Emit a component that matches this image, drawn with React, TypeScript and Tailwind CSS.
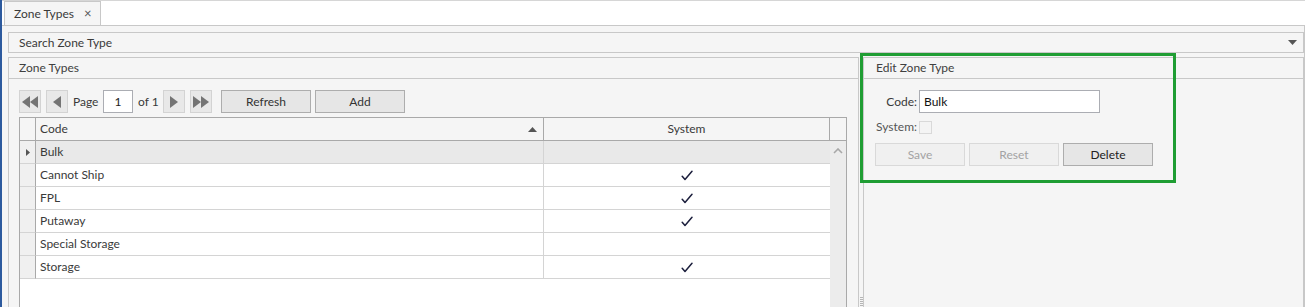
import React from "react";

const Check = () => (
  <svg width="12" height="11" viewBox="0 0 12 11">
    <path d="M1.2 6.2 L4 9.4 L11 1.2" fill="none" stroke="#1c1f3d" strokeWidth="1.5" strokeLinecap="round" strokeLinejoin="round" />
  </svg>
);

const TriLeft = () => (
  <svg width="8" height="12" viewBox="0 0 8 12">
    <polygon points="8,0 0,6 8,12" fill="#747474" />
  </svg>
);
const TriRight = () => (
  <svg width="8" height="12" viewBox="0 0 8 12">
    <polygon points="0,0 8,6 0,12" fill="#747474" />
  </svg>
);
const DblLeft = () => (
  <svg width="16" height="12" viewBox="0 0 16 12">
    <polygon points="8,0 0,6 8,12" fill="#747474" />
    <polygon points="16,0 8,6 16,12" fill="#747474" />
  </svg>
);
const DblRight = () => (
  <svg width="16" height="12" viewBox="0 0 16 12">
    <polygon points="0,0 8,6 0,12" fill="#747474" />
    <polygon points="8,0 16,6 8,12" fill="#747474" />
  </svg>
);

const PagerBtn = ({ children, className = "" }: { children: React.ReactNode; className?: string }) => (
  <div className={`w-[22px] h-[23px] shrink-0 border border-[#d3d3d3] bg-[#e8e8e8] flex items-center justify-center ${className}`}>
    {children}
  </div>
);

const rows = [
  { code: "Bulk", sys: false, sel: true },
  { code: "Cannot Ship", sys: true },
  { code: "FPL", sys: true },
  { code: "Putaway", sys: true },
  { code: "Special Storage", sys: false },
  { code: "Storage", sys: true },
];

export default function App() {
  return (
    <div className="relative w-[1309px] h-[307px] overflow-hidden bg-white text-[12px] leading-none text-[#3a3a3a] font-['Lato','Liberation_Sans',sans-serif] flex">
      <div className="w-[2px] shrink-0 bg-[#2d5a9e]" />
      <div className="flex-1 flex flex-col min-w-0">
        {/* tab strip */}
        <div className="h-[25px] shrink-0 border-t border-[#d6d6d6] flex items-end pl-[2px] mr-[4px]">
          <div className="h-[24px] w-[97px] border border-b-0 border-[#c8c8c8] bg-[#f5f5f5] flex items-center pl-[9px]">
            <span>Zone Types</span>
            <span className="ml-[10px] text-[13px] text-[#555]">×</span>
          </div>
        </div>
        {/* frame */}
        <div className="flex-1 min-h-0 border-t border-r border-[#c8c8c8] bg-[#f5f5f5] mr-[4px] pt-[6px] pl-[6px] flex flex-col gap-[4px]">
          {/* search expander */}
          <div className="h-[21px] shrink-0 border border-[#c8c8c8] bg-[#f5f5f5] flex items-center pl-[10px] pr-[6px]">
            <span>Search Zone Type</span>
            <svg className="ml-auto" width="9" height="5" viewBox="0 0 9 5">
              <polygon points="0,0 9,0 4.5,5" fill="#555" />
            </svg>
          </div>
          {/* main row */}
          <div className="flex flex-1 min-h-0">
            {/* Zone Types box */}
            <div className="w-[851px] h-[400px] shrink-0 border border-[#c8c8c8] bg-[#f5f5f5] flex flex-col">
              <div className="h-[21px] shrink-0 border-b border-[#c8c8c8] flex items-center pl-[10px] text-[#404040]">
                Zone Types
              </div>
              <div className="pt-[11px] pl-[10px] flex flex-col">
                {/* pager */}
                <div className="flex items-center h-[23px]">
                  <PagerBtn><DblLeft /></PagerBtn>
                  <PagerBtn className="ml-[5px]"><TriLeft /></PagerBtn>
                  <span className="ml-[5px] w-[27px]">Page</span>
                  <div className="ml-[3px] w-[30px] h-[23px] bg-white border border-[#abadb3] flex items-center justify-center text-[#222]">1</div>
                  <span className="ml-[5px] w-[21px]">of 1</span>
                  <PagerBtn className="ml-[4px]"><TriRight /></PagerBtn>
                  <PagerBtn className="ml-[5px]"><DblRight /></PagerBtn>
                  <div className="ml-[9px] w-[90px] h-[23px] border border-[#adadad] bg-[#e6e6e6] flex items-center justify-center text-[#333]">Refresh</div>
                  <div className="ml-[4px] w-[90px] h-[23px] border border-[#adadad] bg-[#e6e6e6] flex items-center justify-center text-[#333]">Add</div>
                </div>
                {/* grid */}
                <div className="mt-[4px] w-[828px] h-[300px] border border-[#a9a9a9] bg-white flex flex-col">
                  <div className="flex h-[23px] shrink-0 border-b border-[#a9a9a9] bg-[#f5f5f5]">
                    <div className="w-[16px] shrink-0 border-r border-[#a9a9a9]" />
                    <div className="w-[508px] shrink-0 border-r border-[#a9a9a9] flex items-center pl-[4px] pr-[6px]">
                      <span>Code</span>
                      <svg className="ml-auto" width="9" height="5" viewBox="0 0 9 5">
                        <polygon points="0,5 9,5 4.5,0" fill="#555" />
                      </svg>
                    </div>
                    <div className="w-[286px] shrink-0 border-r border-[#a9a9a9] flex items-center justify-center">System</div>
                    <div className="flex-1" />
                  </div>
                  <div className="flex flex-1 min-h-0">
                    <div className="w-[810px] shrink-0 flex flex-col">
                      {rows.map((r) => (
                        <div key={r.code} className="flex h-[23px] shrink-0">
                          <div className="w-[16px] shrink-0 bg-[#f0f0f0] border-r border-r-[#a9a9a9] border-b border-b-[#d4d4d4] flex items-center justify-center">
                            {r.sel && (
                              <svg width="4" height="7" viewBox="0 0 4 7">
                                <polygon points="0,0 4,3.5 0,7" fill="#555" />
                              </svg>
                            )}
                          </div>
                          <div className={`w-[508px] shrink-0 border-r border-b border-[#d4d4d4] flex items-center pl-[4px] ${r.sel ? "bg-[#e9e9e9]" : "bg-white"}`}>
                            {r.code}
                          </div>
                          <div className={`w-[286px] shrink-0 border-b border-[#d4d4d4] flex items-center justify-center ${r.sel ? "bg-[#e9e9e9]" : "bg-white"}`}>
                            {r.sys && <Check />}
                          </div>
                        </div>
                      ))}
                    </div>
                    <div className="flex-1 bg-[#ececec] flex justify-center pt-[7px]">
                      <svg width="10" height="6" viewBox="0 0 10 6">
                        <path d="M1 5 L5 1 L9 5" fill="none" stroke="#a8a8a8" strokeWidth="1.6" />
                      </svg>
                    </div>
                  </div>
                </div>
              </div>
            </div>
            {/* splitter */}
            <div className="w-[4px] shrink-0 flex flex-col pt-[240px] pl-[1px]">
              <div className="flex flex-col gap-[1px]">
                {Array.from({ length: 6 }).map((_, i) => (
                  <div key={i} className="w-[3px] h-[1px] bg-[#b5b5b5]" />
                ))}
              </div>
            </div>
            {/* Edit box */}
            <div className="flex-1 h-[400px] border border-[#c8c8c8] bg-[#f5f5f5] flex flex-col">
              <div className="h-[21px] shrink-0 border-b border-[#c8c8c8] flex items-center pl-[12px] text-[#404040]">
                Edit Zone Type
              </div>
              <div className="pt-[11px] pl-[11px] flex flex-col">
                <div className="flex items-center h-[23px]">
                  <span className="w-[42px] text-right">Code:</span>
                  <div className="ml-[2px] w-[181px] h-[23px] bg-white border border-[#abadb3] flex items-center pl-[4px] text-[#111]">Bulk</div>
                </div>
                <div className="flex items-center h-[14px] mt-[7px]">
                  <span className="w-[42px] text-right text-[#555]">System:</span>
                  <div className="ml-[2px] w-[13px] h-[13px] border border-[#d9d9d9] bg-[#f4f4f4]" />
                </div>
                <div className="flex items-center mt-[9px] gap-[4px]">
                  <div className="w-[90px] h-[23px] border border-[#d9d9d9] bg-[#f0f0f0] flex items-center justify-center text-[#a3a3a3]">Save</div>
                  <div className="w-[90px] h-[23px] border border-[#d9d9d9] bg-[#f0f0f0] flex items-center justify-center text-[#a3a3a3]">Reset</div>
                  <div className="w-[90px] h-[23px] border border-[#adadad] bg-[#e6e6e6] flex items-center justify-center text-[#222]">Delete</div>
                </div>
              </div>
            </div>
          </div>
        </div>
      </div>
      {/* highlight overlay */}
      <div className="absolute left-[860px] top-[53px] w-[316px] h-[130px] border-[3px] border-[#1f9d33] pointer-events-none" />
    </div>
  );
}
